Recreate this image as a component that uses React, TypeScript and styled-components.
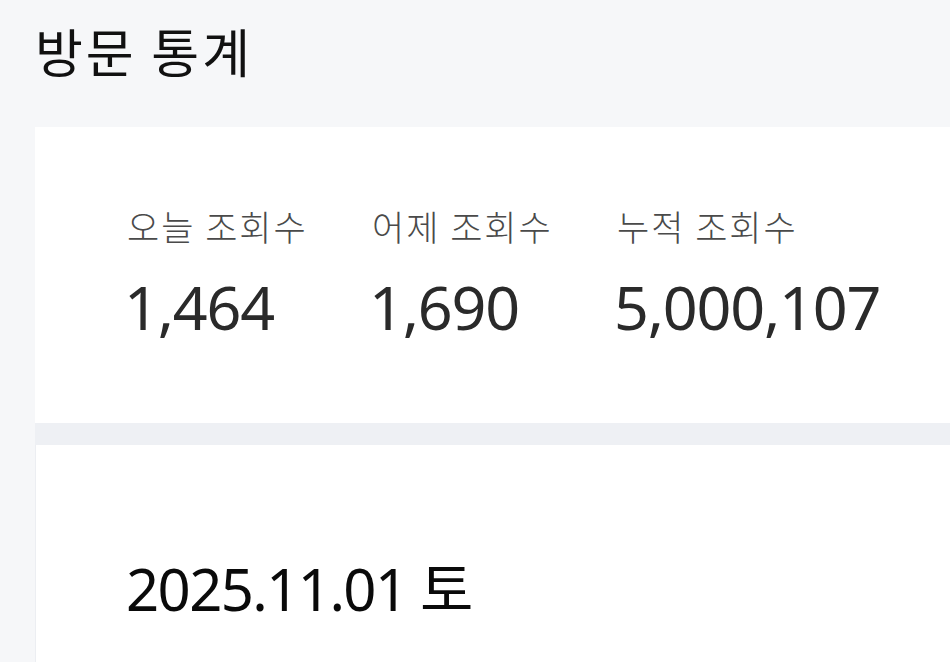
import React from "react";
import styled, { createGlobalStyle } from "styled-components";

const Global = createGlobalStyle`
  html, body { margin: 0; padding: 0; }
  body {
    background: #f6f7f9;
    font-family: "Noto Sans", "Noto Sans CJK KR", sans-serif;
    color: #111;
    overflow: hidden;
  }
`;

const Page = styled.main`
  padding: 12px 0 0 35px;
  height: 662px;
  box-sizing: border-box;
  overflow: hidden;
`;

const Title = styled.h1`
  margin: 0;
  font-family: "Noto Sans CJK KR", sans-serif;
  font-weight: 400;
  font-size: 52px;
  line-height: 78px;
  color: #111;
  letter-spacing: 3px;
`;

const StatsCard = styled.section`
  margin-top: 37px;
  background: #fff;
  height: 296px;
  box-sizing: border-box;
  padding: 76px 0 0 92px;
  display: flex;
`;

const Gap = styled.div`
  height: 22px;
  background: #eef0f4;
`;

const DateCard = styled.section`
  background: #fff;
  height: 300px;
  box-sizing: border-box;
  padding: 104px 0 0 90px;
  border-left: 1px solid #eceef2;
`;

const Stat = styled.div`
  width: 245px;
  display: flex;
  flex-direction: column;
`;

const Label = styled.div`
  font-family: "Noto Sans CJK KR", sans-serif;
  font-weight: 300;
  font-size: 35px;
  line-height: 46px;
  color: #4a4a4a;
  letter-spacing: 2px;
`;

const Value = styled.div`
  margin: 20px 0 0 -3px;
  font-family: "Noto Sans", "Noto Sans CJK KR", sans-serif;
  font-weight: 400;
  font-size: 61px;
  line-height: 76px;
  color: #2a2a2a;
  letter-spacing: -1.2px;
`;

const DateText = styled.div`
  font-family: "Noto Sans", "Noto Sans CJK KR", sans-serif;
  font-size: 58px;
  line-height: 80px;
  color: #0a0a0a;
  letter-spacing: -1.6px;
`;

const stats = [
  { label: "오늘 조회수", value: "1,464" },
  { label: "어제 조회수", value: "1,690" },
  { label: "누적 조회수", value: "5,000,107" },
];

export default function App() {
  return (
    <>
      <Global />
      <Page>
        <Title>방문 통계</Title>
        <StatsCard>
          {stats.map((s) => (
            <Stat key={s.label}>
              <Label>{s.label}</Label>
              <Value>{s.value}</Value>
            </Stat>
          ))}
        </StatsCard>
        <Gap />
        <DateCard>
          <DateText>2025.11.01 토</DateText>
        </DateCard>
      </Page>
    </>
  );
}
